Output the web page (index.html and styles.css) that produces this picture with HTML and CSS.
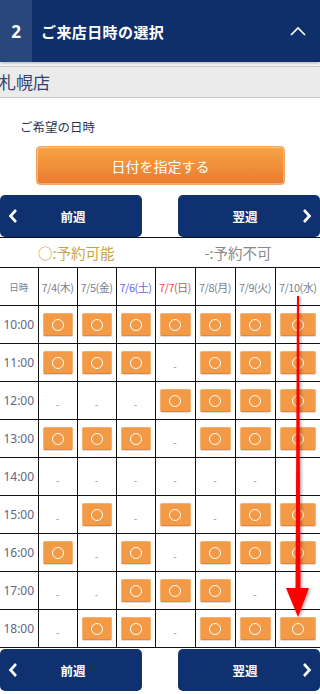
FILE: index.html
```html
<!DOCTYPE html>
<html lang="ja">
<head>
    <meta charset="UTF-8">
    <meta name="viewport" content="width=device-width, initial-scale=1.0">
    <title>ご来店日時の選択</title>
    <link rel="stylesheet" href="styles.css">
</head>
<body>
    <div class="sheet">
        <div class="step-head">
            <div class="step-num">2</div>
            <div class="step-title">ご来店日時の選択</div>
            <svg class="step-toggle" width="16" height="10" viewBox="0 0 16 10"><path d="M1 9 L8 2 L15 9" fill="none" stroke="#fff" stroke-width="1.6"/></svg>
        </div>
        <div class="shop">札幌店</div>
        <div class="wish">ご希望の日時</div>
        <button class="date-btn">日付を指定する</button>

        <div class="week-nav">
            <button class="week-btn prev">
                <svg class="chev" width="10" height="16" viewBox="0 0 10 16"><path d="M8 2 L2.5 8 L8 14" fill="none" stroke="#fff" stroke-width="2.6"/></svg>
                <span>前週</span>
            </button>
            <button class="week-btn next">
                <span>翌週</span>
                <svg class="chev" width="10" height="16" viewBox="0 0 10 16"><path d="M2 2 L7.5 8 L2 14" fill="none" stroke="#fff" stroke-width="2.6"/></svg>
            </button>
        </div>

        <div class="legend">
            <span class="ok">○:予約可能</span>
            <span class="ng">-:予約不可</span>
        </div>

        <table class="slots">
            <colgroup>
                <col style="width:38px"><col style="width:39px"><col style="width:39px"><col style="width:39px">
                <col style="width:40px"><col style="width:40px"><col style="width:40px"><col>
            </colgroup>
            <thead>
                <tr>
                    <th class="lbl">日時</th>
                    <th>7/4(木)</th>
                    <th>7/5(金)</th>
                    <th class="sat">7/6(土)</th>
                    <th class="sun">7/7(日)</th>
                    <th>7/8(月)</th>
                    <th>7/9(火)</th>
                    <th>7/10(水)</th>
                </tr>
            </thead>
            <tbody id="slotBody"></tbody>
        </table>

        <div class="week-nav bottom">
            <button class="week-btn prev">
                <svg class="chev" width="10" height="16" viewBox="0 0 10 16"><path d="M8 2 L2.5 8 L8 14" fill="none" stroke="#fff" stroke-width="2.6"/></svg>
                <span>前週</span>
            </button>
            <button class="week-btn next">
                <span>翌週</span>
                <svg class="chev" width="10" height="16" viewBox="0 0 10 16"><path d="M2 2 L7.5 8 L2 14" fill="none" stroke="#fff" stroke-width="2.6"/></svg>
            </button>
        </div>

        <svg class="arrow" width="40" height="330" viewBox="0 0 40 330">
            <defs>
                <filter id="sh" x="-50%" y="-10%" width="200%" height="120%">
                    <feDropShadow dx="1.5" dy="1" stdDeviation="1.5" flood-color="#000" flood-opacity="0.35"/>
                </filter>
            </defs>
            <path d="M17 4 L19 4 L20.5 296 L29 296 L18 325 L6 296 L15.5 296 Z" fill="#ff0000" filter="url(#sh)"/>
        </svg>
    </div>

    <script>
        // --- Availability (1 = bookable) ---
        const slots = [
            ['10:00', [1,1,1,1,1,1,1]],
            ['11:00', [1,1,1,0,1,1,1]],
            ['12:00', [0,0,0,1,1,1,1]],
            ['13:00', [1,1,1,0,1,1,1]],
            ['14:00', [0,0,0,0,0,0,0]],
            ['15:00', [0,1,0,1,0,1,1]],
            ['16:00', [1,0,1,0,1,1,1]],
            ['17:00', [0,0,1,1,1,0,0]],
            ['18:00', [0,1,1,0,1,1,1]]
        ];
        const slotBody = document.getElementById('slotBody');
        slotBody.innerHTML = slots.map(([time, days]) =>
            `<tr><td class="time">${time}</td>` +
            days.map(d => d
                ? '<td><button class="slot"><span class="ring"></span></button></td>'
                : '<td><span class="dash">-</span></td>').join('') +
            '</tr>').join('');
    </script>
</body>
</html>
```

FILE: styles.css
```css
body {
    margin: 0;
    padding: 0;
    background: #fff;
    font-family: "Noto Sans CJK JP", "Noto Sans", sans-serif;
    color: #333;
}
.sheet {
    position: relative;
    width: 320px;
    overflow: hidden;
}
.step-head {
    display: flex;
    align-items: center;
    height: 62px;
    background: #0f2f6a;
    color: #fff;
    box-shadow: 0 2px 3px rgba(0,0,0,0.25);
}
.step-num {
    width: 32px;
    height: 100%;
    background: #28477b;
    display: flex;
    align-items: center;
    justify-content: center;
    font-family: "Noto Sans", sans-serif;
    font-weight: bold;
    font-size: 17px;
}
.step-title {
    flex: 1;
    padding-left: 9px;
    font-weight: bold;
    font-size: 15px;
    letter-spacing: 0.4px;
}
.step-toggle {
    margin-right: 14px;
}
.shop {
    margin-top: 4px;
    height: 30px;
    line-height: 30px;
    background: #ebebeb;
    border-top: 1px solid #c9c9c9;
    border-bottom: 1px solid #c9c9c9;
    font-size: 17px;
    color: #34436a;
    text-indent: -1px;
}
.wish {
    margin-top: 20px;
    padding-left: 20px;
    font-size: 12.5px;
    color: #2c3550;
    line-height: 18px;
}
.date-btn {
    display: block;
    width: 249px;
    height: 39px;
    margin: 10px 0 0 36px;
    background: linear-gradient(#f6a545, #eb7a2f);
    border: 1px solid #f2a560;
    border-radius: 4px;
    box-shadow: inset 0 0 0 1px rgba(255,255,255,0.35);
    color: #fff;
    font-family: inherit;
    font-size: 14px;
    cursor: pointer;
}
.week-nav {
    display: flex;
    justify-content: space-between;
    margin-top: 10px;
}
.week-nav.bottom {
    margin-top: 1px;
}
.week-btn {
    display: flex;
    align-items: center;
    width: 142px;
    height: 42px;
    padding: 0 8px;
    background: #0f3170;
    border: none;
    border-radius: 5px;
    color: #fff;
    font-family: inherit;
    font-weight: bold;
    font-size: 12.5px;
    cursor: pointer;
}
.week-btn span {
    flex: 1;
    text-align: center;
}
.week-btn.prev span {
    padding-right: 6px;
}
.week-btn.next span {
    padding-left: 2px;
}
.legend {
    display: flex;
    height: 29px;
    align-items: center;
    border-top: 1px solid #111;
    font-size: 14.5px;
}
.legend .ok {
    color: #c9a24a;
    margin-left: 38px;
}
.legend .ng {
    color: #888;
    margin-left: 90px;
}
.slots {
    width: 320px;
    border-collapse: collapse;
    table-layout: fixed;
    border-top: 1px solid #111;
}
.slots th,
.slots td {
    height: 37px;
    padding: 0 4px;
    text-align: center;
    border-left: 1px solid #111;
    border-bottom: 1px solid #111;
    font-weight: normal;
}
.slots th {
    padding: 0;
    font-size: 11px;
    color: #7a7f8e;
    white-space: nowrap;
    letter-spacing: -0.5px;
}
.slots th.lbl,
.slots td.time {
    border-left: none;
}
.slots th.lbl {
    font-size: 9.5px;
    letter-spacing: 0;
}
.slots th.sat {
    color: #6a62f0;
}
.slots th.sun {
    color: #f04848;
}
.slots td.time {
    padding: 0;
    font-family: "Noto Sans", sans-serif;
    font-size: 12px;
    color: #5c6785;
}
.slot {
    display: flex;
    align-items: center;
    justify-content: center;
    width: 100%;
    height: 23px;
    padding: 0;
    background: #f29a45;
    border: 1px solid #f5b172;
    border-bottom-color: #e8843a;
    border-radius: 2px;
    box-shadow: 0 1px 1px rgba(0,0,0,0.15);
    cursor: pointer;
}
.ring {
    width: 10px;
    height: 10px;
    border: 1.2px solid #fff;
    border-radius: 50%;
}
.dash {
    font-size: 10px;
    color: #8a90b0;
}
.arrow {
    position: absolute;
    left: 280px;
    top: 292px;
}
```
